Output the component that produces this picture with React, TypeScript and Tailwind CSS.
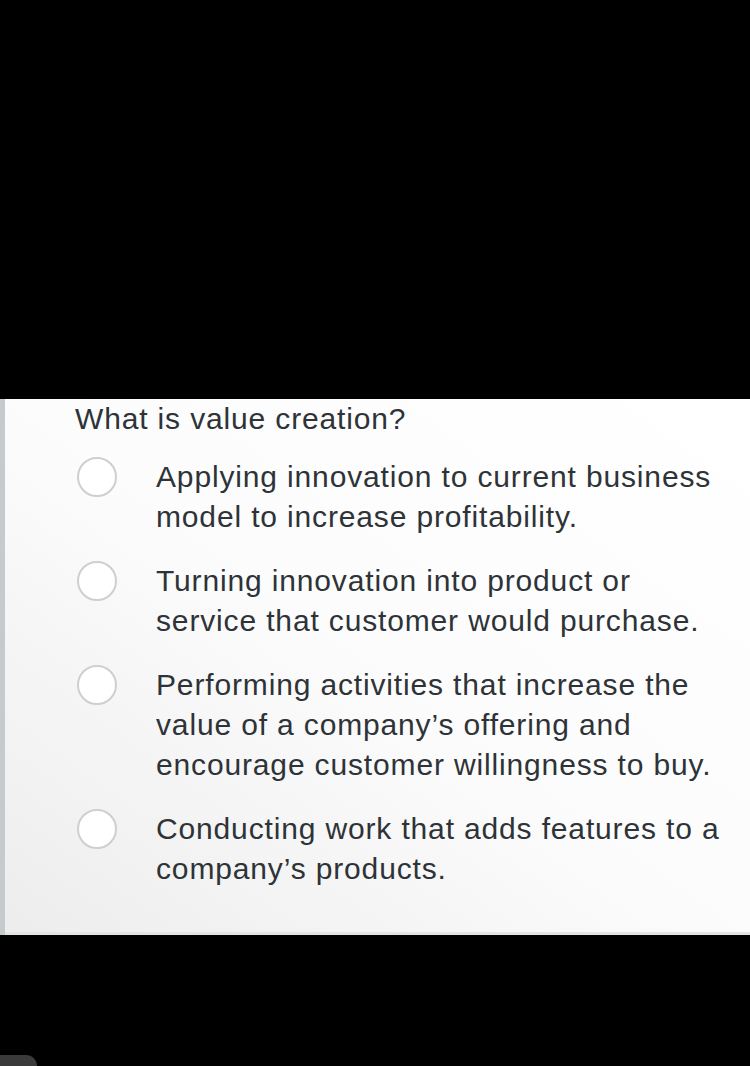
import React from "react";

const options = [
  ["Applying innovation to current business", "model to increase profitability."],
  ["Turning innovation into product or", "service that customer would purchase."],
  [
    "Performing activities that increase the",
    "value of a company\u2019s offering and",
    "encourage customer willingness to buy.",
  ],
  ["Conducting work that adds features to a", "company\u2019s products."],
];

export default function App() {
  return (
    <div
      className="w-[750px] h-[1066px] bg-black flex flex-col overflow-hidden"
      style={{ fontFamily: '"Liberation Sans", Arial, sans-serif' }}
    >
      <div className="h-[399px] shrink-0" />
      <div className="h-[536px] shrink-0 flex">
        <div className="w-[5px] bg-[#c5cacc]" />
        <div className="flex-1 flex flex-col bg-gradient-to-tr from-[#ededed] via-[#fcfcfc] to-white border-b-[3px] border-[#e4e4e4]">
          <div className="pl-[70px] text-[30px] leading-[40px] tracking-[0.85px] text-[#2e3338]">
            What is value creation?
          </div>
          <div className="mt-[18px] flex flex-col gap-[24px]">
            {options.map((lines, i) => (
              <div key={i} className="flex items-start">
                <div className="ml-[72px] w-[40px] h-[40px] rounded-full border-2 border-[#cfcfcf] bg-white shrink-0" />
                <div className="ml-[39px] text-[30px] leading-[40px] tracking-[0.85px] text-[#2e3338] whitespace-nowrap">
                  {lines.map((l, j) => (
                    <div key={j}>{l}</div>
                  ))}
                </div>
              </div>
            ))}
          </div>
        </div>
      </div>
      <div className="flex-1 flex flex-col justify-end">
        <div className="w-[37px] h-[11px] bg-[#3a3a3a] rounded-tr-[18px]" />
      </div>
    </div>
  );
}
